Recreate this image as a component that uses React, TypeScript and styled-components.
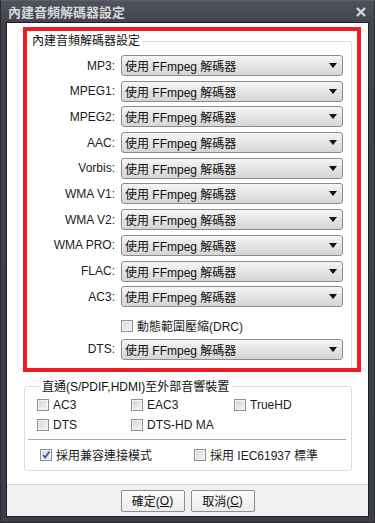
import styled, { createGlobalStyle } from "styled-components"

const GlobalStyle = createGlobalStyle`
  html, body {
    margin: 0;
    padding: 0;
    background: #3b3e47;
  }
  body {
    font-family: "Liberation Sans", "Noto Sans CJK TC", sans-serif;
    font-size: 12px;
    color: #1b1b1b;
  }
`

const decoders = [
  "MP3",
  "MPEG1",
  "MPEG2",
  "AAC",
  "Vorbis",
  "WMA V1",
  "WMA V2",
  "WMA PRO",
  "FLAC",
  "AC3",
]

function Arrow() {
  return (
    <svg width="8" height="5" viewBox="0 0 8 5">
      <path d="M0 0 H8 L4 5 Z" fill="#111" />
    </svg>
  )
}

function CloseIcon() {
  return (
    <svg width="10" height="10" viewBox="0 0 10 10">
      <path d="M1 1 L9 9 M9 1 L1 9" stroke="#d4d5d8" strokeWidth="2.4" />
    </svg>
  )
}

function Tick() {
  return (
    <svg width="10" height="10" viewBox="0 0 10 10">
      <path d="M2 5 L4.2 7.6 L8.4 1.6" stroke="#3d56b8" strokeWidth="1.8" fill="none" />
    </svg>
  )
}

function Check({ checked, label }: { checked?: boolean; label: string }) {
  return (
    <CheckRow>
      <Box>{checked && <Tick />}</Box>
      <span>{label}</span>
    </CheckRow>
  )
}

function Select() {
  return (
    <Combo>
      <span>使用 FFmpeg 解碼器</span>
      <Arrow />
    </Combo>
  )
}

export default function App() {
  return (
    <>
      <GlobalStyle />
      <Window>
        <TitleBar>
          <Title>內建音頻解碼器設定</Title>
          <CloseIcon />
        </TitleBar>
        <Content>
          <Highlight>
            <DecoderGroup>
              <Legend>內建音頻解碼器設定</Legend>
              <Rows>
                {decoders.map((d) => (
                  <Row key={d}>
                    <Label>{d}:</Label>
                    <Select />
                  </Row>
                ))}
                <DrcRow>
                  <Label />
                  <Check label="動態範圍壓縮(DRC)" />
                </DrcRow>
                <Row>
                  <Label>DTS:</Label>
                  <Select />
                </Row>
              </Rows>
            </DecoderGroup>
          </Highlight>
          <PassGroup>
            <Legend>直通(S/PDIF,HDMI)至外部音響裝置</Legend>
            <PassGrid>
              <Check label="AC3" />
              <Check label="EAC3" />
              <Check label="TrueHD" />
              <Check label="DTS" />
              <Check label="DTS-HD MA" />
            </PassGrid>
            <Divider />
            <OptionGrid>
              <Check checked label="採用兼容連接模式" />
              <Check label="採用 IEC61937 標準" />
            </OptionGrid>
          </PassGroup>
          <Footer>
            <Button>
              確定(<u>O</u>)
            </Button>
            <Button>
              取消(<u>C</u>)
            </Button>
          </Footer>
        </Content>
      </Window>
    </>
  )
}

const Window = styled.div`
  width: 375px;
  height: 523px;
  box-sizing: border-box;
  display: flex;
  flex-direction: column;
  padding: 0 5px 5px;
  background: linear-gradient(#50535c 0px, #41444d 22px, #3b3e47 100%);
  border: 1px solid #2a2c32;
  border-top-color: #5c5f68;
`

const TitleBar = styled.div`
  height: 21px;
  display: flex;
  align-items: center;
  justify-content: space-between;
  padding: 0 3px 0 2px;
`

const Title = styled.div`
  color: #d6d7da;
  font-size: 13px;
  font-weight: bold;
`

const Content = styled.div`
  flex: 1;
  display: flex;
  flex-direction: column;
  background: #fff;
  border: 1px solid #1c1e23;
`

const Highlight = styled.div`
  width: 338px;
  box-sizing: border-box;
  margin: 4px 0 0 16px;
  border: 4px solid #ee1c25;
  padding: 0 5px 0 0;
`

const Group = styled.fieldset`
  margin: 0;
  padding: 0;
  border: 1px solid #d6dfe6;
  border-radius: 3px;
  min-width: 0;
`

const DecoderGroup = styled(Group)`
  margin-top: 2px;
  border-left: none;
  border-bottom: none;
  border-radius: 0 3px 0 0;
  padding: 6px 8px 8px 0;
`

const Legend = styled.legend`
  padding: 0 3px;
  margin-left: 2px;
  line-height: 16px;
  font-size: 12px;
  color: #111;
`

const Rows = styled.div`
  display: flex;
  flex-direction: column;
  gap: 4.7px;
`

const Row = styled.div`
  display: flex;
  align-items: center;
  gap: 6px;
  height: 21px;
`

const DrcRow = styled(Row)`
  height: 22px;
  align-items: flex-end;
`

const Label = styled.div`
  width: 88px;
  flex: none;
  text-align: right;
  font-size: 12px;
`

const Combo = styled.div`
  flex: 1;
  height: 21px;
  box-sizing: border-box;
  display: flex;
  align-items: center;
  justify-content: space-between;
  padding: 0 5px 0 3px;
  border: 1px solid #8c8c8c;
  border-radius: 3px;
  background: linear-gradient(#f6f6f6, #e4e4e4 50%, #d6d6d6);
  font-size: 12px;
  color: #111;
`

const CheckRow = styled.label`
  display: flex;
  align-items: center;
  gap: 4px;
  height: 16px;
  font-size: 12px;
  white-space: nowrap;
`

const Box = styled.span`
  width: 12px;
  height: 12px;
  box-sizing: border-box;
  flex: none;
  display: flex;
  align-items: center;
  justify-content: center;
  border: 1px solid #8e8f8f;
  background: linear-gradient(135deg, #d4d4d4, #f6f6f6);
  box-shadow: inset 0 0 0 1px #f4f4f4;
`

const PassGroup = styled(Group)`
  margin: 7px 0 0 17px;
  width: 328px;
  box-sizing: border-box;
  padding: 2px 10px 7px 12px;
`

const PassGrid = styled.div`
  display: grid;
  grid-template-columns: 94px 103px 1fr;
  row-gap: 4px;
`

const Divider = styled.div`
  height: 1px;
  background: #a7a7a7;
  margin: 6px -5px 7px -9px;
`

const OptionGrid = styled.div`
  display: grid;
  grid-template-columns: 154px 1fr;
  padding-left: 3px;
`

const Footer = styled.div`
  margin-top: auto;
  height: 31px;
  display: flex;
  align-items: center;
  justify-content: center;
  gap: 6px;
  background: #f0f0f0;
  border-top: 1px solid #d7d7d7;
`

const Button = styled.div`
  width: 64px;
  height: 22px;
  box-sizing: border-box;
  display: flex;
  align-items: center;
  justify-content: center;
  border: 1px solid #8d8d8d;
  border-radius: 2px;
  background: linear-gradient(#fbfbfb, #ececec);
  font-size: 12px;
  color: #111;
`
